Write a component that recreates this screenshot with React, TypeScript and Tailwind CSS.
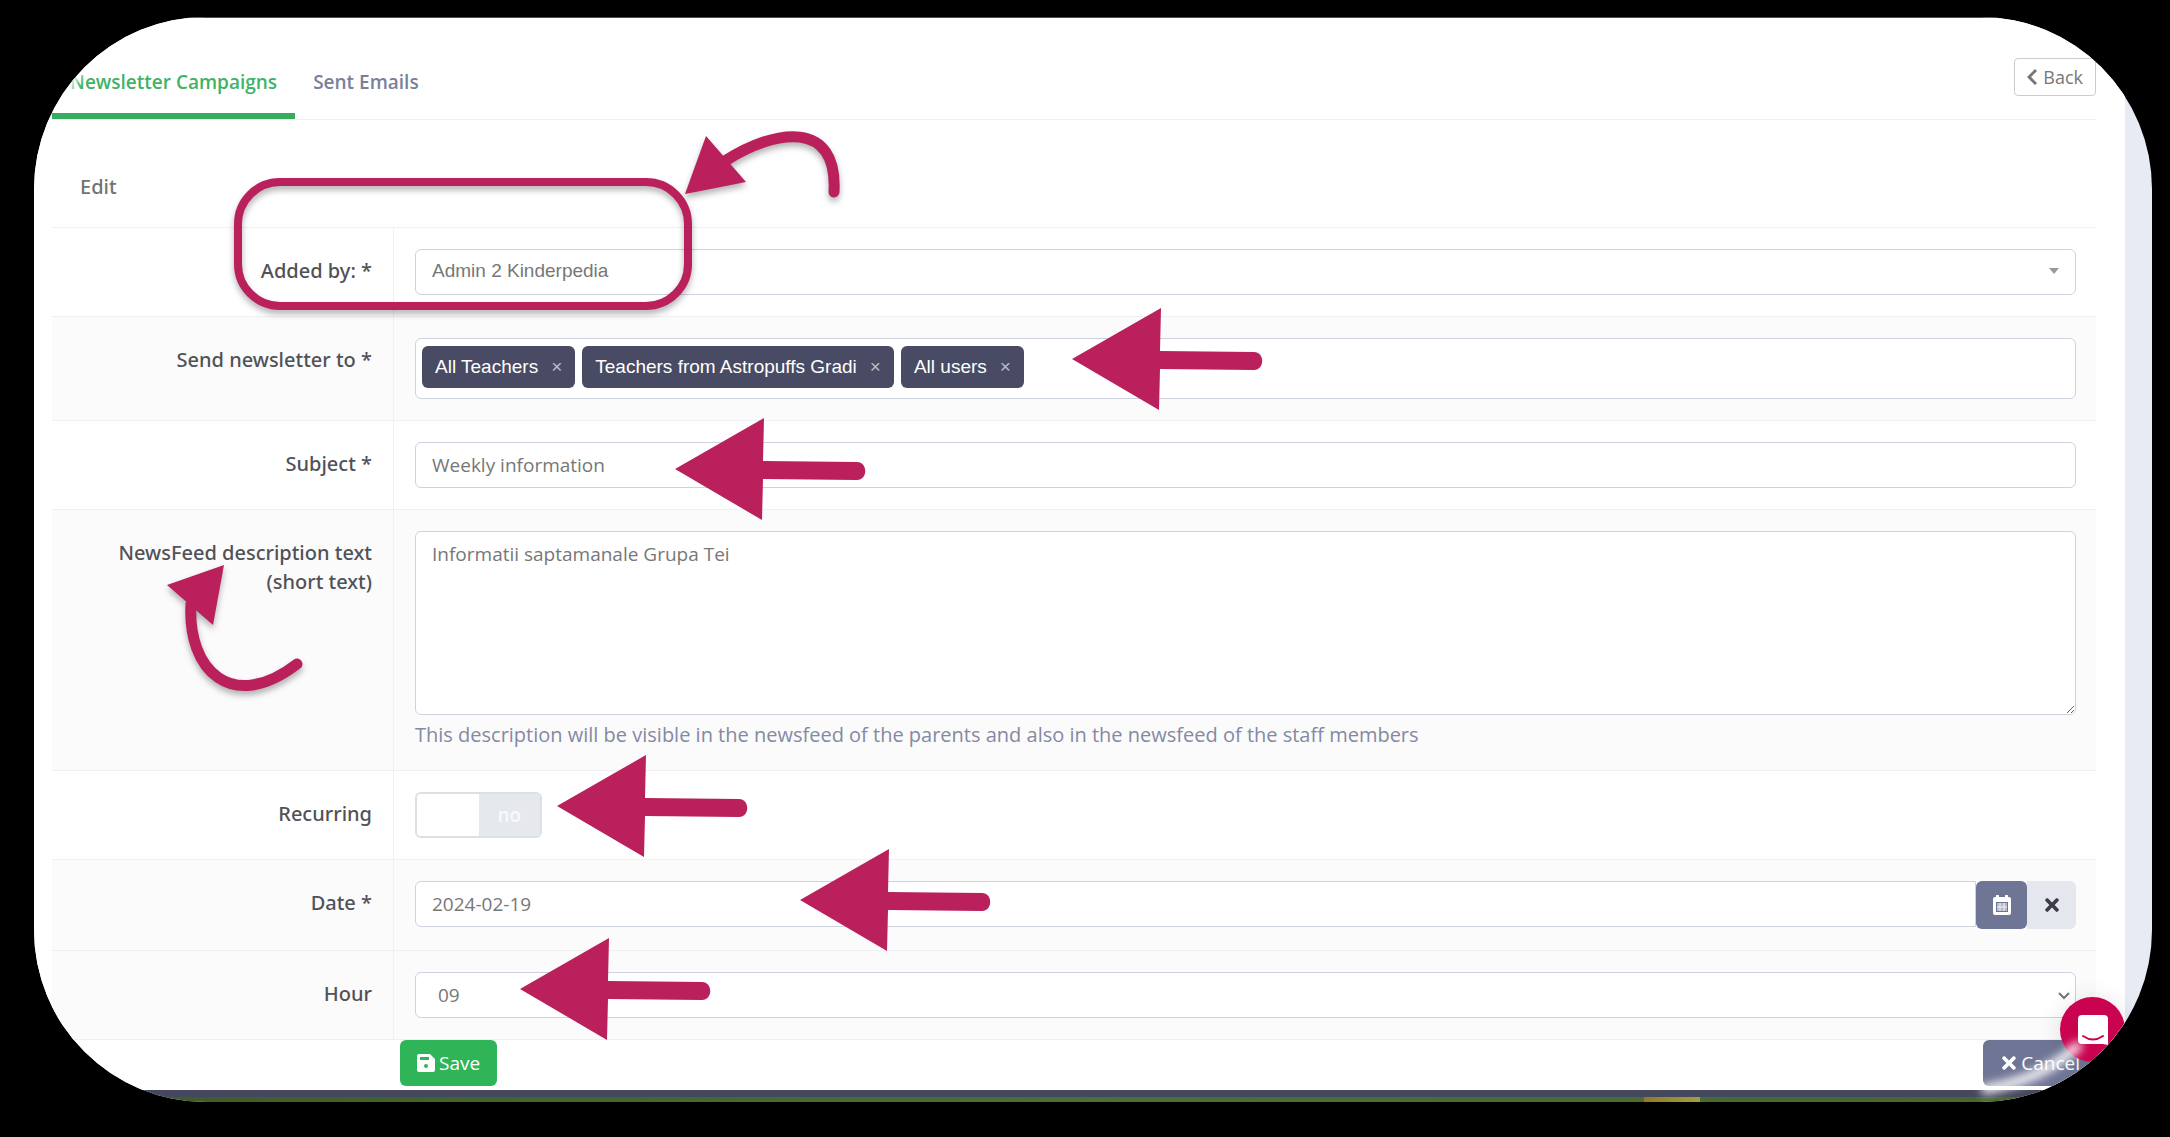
import type { ReactNode } from 'react';
import { FaTimes } from 'react-icons/fa';

const ARROWS = [
  { x: 1072, y: 359 },
  { x: 675, y: 469 },
  { x: 557, y: 806 },
  { x: 800, y: 900 },
  { x: 520, y: 989 },
];

const HOURS = ['07', '08', '09', '10', '11', '12'];

const FIELD = 'block w-full rounded-md border border-[#ccd3de] bg-white text-[19px] text-[#777]';

function Row({ label, htmlFor, shaded, children }: { label: ReactNode; htmlFor: string; shaded?: boolean; children: ReactNode }) {
  return (
    <div className={`flex border-t border-[#eff0f2] ${shaded ? 'bg-[#fbfbfb]' : 'bg-white'}`}>
      <div className="w-[342px] shrink-0 border-r border-[#eff0f2] pl-12 pr-[21px] pt-7 text-right">
        <label htmlFor={htmlFor} className="block font-['Noto_Sans',sans-serif] text-[20px] leading-[29px] font-medium text-[#515258]">{label}</label>
      </div>
      <div className="min-w-0 flex-1 py-[21px] pr-5 pl-[21px]">{children}</div>
    </div>
  );
}

function Chip({ text }: { text: string }) {
  return (
    <span className="flex h-[42px] items-center gap-[13px] rounded-md bg-[#484b63] px-[13px] font-['Liberation_Sans',sans-serif] text-[19px] text-white">
      {text}
      <button type="button" aria-label={`Remove ${text}`} className="text-[19px] text-[#b9bbc9]">×</button>
    </span>
  );
}

function SaveIcon() {
  return (
    <svg viewBox="0 0 18 18" className="size-[18px]" aria-hidden="true">
      <path fillRule="evenodd" fill="currentColor" d="M2 0h11l5 5v11a2 2 0 0 1-2 2H2a2 2 0 0 1-2-2V2a2 2 0 0 1 2-2Zm1 3v3h9V3Zm6 7a2 2 0 1 0 0 4a2 2 0 0 0 0-4Z" />
    </svg>
  );
}

function BackIcon() {
  return (
    <svg viewBox="0 0 10 16" className="h-4 w-2.5" fill="none" stroke="currentColor" strokeWidth="3" aria-hidden="true">
      <path d="M9 1L2 8l7 7" />
    </svg>
  );
}

function CalendarIcon() {
  return (
    <svg viewBox="0 0 18 20" className="h-5 w-[18px]" aria-hidden="true">
      <path fillRule="evenodd" fill="currentColor" d="M2 2h1V1a1 1 0 0 1 3 0v1h6V1a1 1 0 0 1 3 0v1h1a2 2 0 0 1 2 2v14a2 2 0 0 1-2 2H2a2 2 0 0 1-2-2V4a2 2 0 0 1 2-2Zm1 5v10h12V7Z" />
      <path d="M4 8h10v8H4Z" fill="currentColor" opacity="0.5" />
      <path d="M7 8v8M11 8v8M4 12h10" stroke="currentColor" strokeWidth="1" opacity="0.8" />
    </svg>
  );
}

// Hand-drawn marks that point at the fields
function Annotations() {
  return (
    <svg viewBox="0 0 2170 1137" className="pointer-events-none absolute top-0 left-0 h-[1137px] w-[2170px]" aria-hidden="true">
      <g className="drop-shadow-[0_4px_3px_rgba(0,0,0,0.3)]" fill="none" stroke="#b9205c">
        <rect x="238" y="182" width="450" height="124" rx="42" strokeWidth="8" />
        <path d="M725 161C775 129 838 119 834 192" strokeWidth="11" strokeLinecap="round" />
        <path d="M706 136L685 194L746 182Z" fill="#b9205c" stroke="none" />
        <path d="M191 604C187 670 232 714 297 664" strokeWidth="11" strokeLinecap="round" />
        <path d="M224 565L167 585L213 625Z" fill="#b9205c" stroke="none" />
      </g>
      {ARROWS.map((a) => (
        <path
          key={`${a.x}-${a.y}`}
          transform={`translate(${a.x} ${a.y})`}
          d="M0 0L89 -51L88 -8L182 -7C193 -7 193 11 182 11L88 10L87 51Z"
          fill="#b9205c"
        />
      ))}
    </svg>
  );
}

export default function App() {
  return (
    <div className="relative min-h-screen overflow-hidden bg-black pt-[17px] pr-[18px] pb-9 pl-[34px] font-['Open_Sans',sans-serif]">
      <div className="relative overflow-hidden rounded-[172px] bg-[#e8ebf4]">
        <div className="h-px bg-[#4a4b5f]" />
        <div className="mr-[27px] bg-white pr-[29px] pl-[18px]">
          <header className="flex items-start justify-between border-b border-[#eff0f2]">
            <nav className="flex pt-8 text-[19px] font-semibold">
              <a href="#campaigns" className="border-b-6 border-[#35ad5c] px-[18px] pt-[18px] pb-[17px] leading-7 text-[#3fb366]">Newsletter Campaigns</a>
              <a href="#sent" className="px-[18px] pt-[18px] leading-7 text-[#7a809b]">Sent Emails</a>
            </nav>
            <button type="button" className="mt-10 flex h-[38px] items-center gap-1.5 rounded border border-[#ccc] px-3 text-[18px] text-[#777]">
              <BackIcon />
              Back
            </button>
          </header>

          <form>
            <h1 className="px-7 pt-[53px] pb-[26px] font-['Noto_Sans',sans-serif] text-[20px] leading-7 font-medium text-[#737373]">Edit</h1>

            <Row label="Added by: *" htmlFor="added">
              <button id="added" type="button" className={`${FIELD} flex h-[46px] items-center justify-between px-4 pb-0.5 text-left font-['Liberation_Sans',sans-serif]`}>
                Admin 2 Kinderpedia
                <span className="border-x-5 border-t-6 border-x-transparent border-t-[#999]" />
              </button>
            </Row>

            <Row label="Send newsletter to *" htmlFor="recipients" shaded>
              <div className={`${FIELD} flex h-[61px] items-start gap-[7px] px-1.5 pt-[7px]`}>
                <Chip text="All Teachers" />
                <Chip text="Teachers from Astropuffs Gradi" />
                <Chip text="All users" />
                <input id="recipients" className="h-[42px] min-w-0 flex-1 outline-none" />
              </div>
            </Row>

            <Row label="Subject *" htmlFor="subject">
              <input id="subject" defaultValue="Weekly information" className={`${FIELD} h-[46px] px-4`} />
            </Row>

            <Row label="NewsFeed description text (short text)" htmlFor="description" shaded>
              <textarea id="description" defaultValue="Informatii saptamanale Grupa Tei" className={`${FIELD} h-[184px] resize-y px-4 py-2 leading-7`} />
              <p className="pt-1.5 text-[20px] leading-7 text-[#8489a3]">
                This description will be visible in the newsfeed of the parents and also in the newsfeed of the staff members
              </p>
            </Row>

            <Row label="Recurring" htmlFor="recurring">
              <div className="relative flex h-[46px] w-[127px] overflow-hidden rounded-md border-2 border-[#dce0e5]">
                <input id="recurring" type="checkbox" role="switch" className="absolute inset-0 z-10 cursor-pointer opacity-0" />
                <span className="w-1/2 bg-white" />
                <span className="flex w-1/2 items-center justify-center bg-[#e5e8ed] text-[19px] font-semibold text-[#f8f9fb]">no</span>
              </div>
            </Row>

            <Row label="Date *" htmlFor="date" shaded>
              <div className="flex h-12">
                <input id="date" defaultValue="2024-02-19" className={`${FIELD} h-[46px] min-w-0 flex-1 rounded-r-none px-4`} />
                <button type="button" aria-label="Pick a date" className="flex w-[51px] items-center justify-center rounded-md bg-[#6f7595] text-white">
                  <CalendarIcon />
                </button>
                <button type="button" aria-label="Clear date" className="flex w-[49px] items-center justify-center rounded-r-md bg-[#e4e7ee] text-[#3c3d48]">
                  <FaTimes className="size-5" />
                </button>
              </div>
            </Row>

            <Row label="Hour" htmlFor="hour" shaded>
              <div className="relative">
                <select id="hour" defaultValue="09" className={`${FIELD} h-[46px] appearance-none px-[22px]`}>
                  {HOURS.map((h) => <option key={h}>{h}</option>)}
                </select>
                <svg viewBox="0 0 12 8" className="pointer-events-none absolute top-5 right-1.5 h-2 w-3" fill="none" stroke="#777" strokeWidth="2" aria-hidden="true">
                  <path d="M1 1l5 5l5-5" />
                </svg>
              </div>
            </Row>

            <div className="flex justify-between border-t border-[#eff0f2] pb-1 pl-[348px]">
              <button type="submit" className="flex h-[46px] items-center gap-1 rounded-md bg-[#2fb457] px-[17px] text-[19px] text-white">
                <SaveIcon />
                Save
              </button>
              <button type="button" className="flex h-[46px] items-center gap-0.5 rounded-md bg-[#6f7595] px-4 text-[19px] text-white">
                <FaTimes className="size-5" />
                Cancel
              </button>
            </div>
          </form>
        </div>

        <div className="h-[7px] bg-[#45475c]" />
        <div className="h-[5px] bg-linear-to-r from-[#3d5a2a] via-[#4c7038] to-[#47652f]">
          <div className="ml-[76%] h-full w-14 bg-linear-to-r from-[#8f7a2a] to-[#a3a040]" />
        </div>

        <button type="button" aria-label="Open chat" className="absolute right-[27px] bottom-10 flex size-[65px] items-center justify-center rounded-full bg-[#c9034f] shadow-[0_2px_24px_rgba(0,0,0,0.12)]">
          <svg viewBox="0 0 30 30" className="size-[30px]" aria-hidden="true">
            <path d="M4 0h22a4 4 0 0 1 4 4v26l-5-1H4a4 4 0 0 1-4-4V4a4 4 0 0 1 4-4Z" fill="#fff" />
            <path d="M5 21q10 7 20 0" fill="none" stroke="#c9034f" strokeWidth="2" strokeLinecap="round" />
          </svg>
        </button>

        {/* glossy edges in the rounded corners */}
        <svg viewBox="0 0 200 200" className="pointer-events-none absolute top-0 left-0 size-[200px]" aria-hidden="true">
          <path d="M26 84C34 66 42 54 54 42" fill="none" stroke="#fff" strokeWidth="10" className="blur-[4px]" />
        </svg>
        <svg viewBox="0 0 200 200" className="pointer-events-none absolute right-0 bottom-0 size-[200px]" aria-hidden="true">
          <path d="M30 188C78 180 104 164 128 142" fill="none" stroke="#fff" strokeWidth="9" className="blur-[5px]" />
        </svg>
      </div>
      <Annotations />
    </div>
  );
}
